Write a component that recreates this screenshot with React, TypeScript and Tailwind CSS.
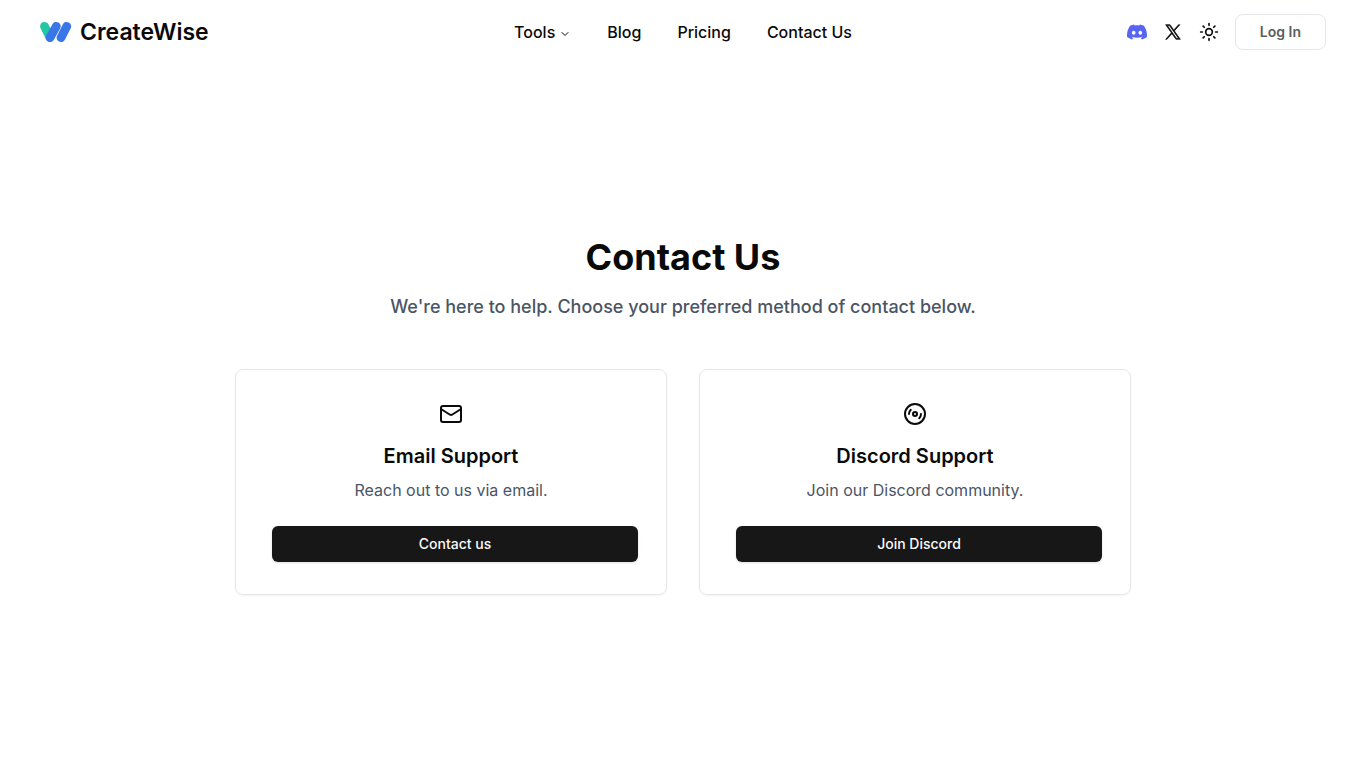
import React, { ReactNode } from 'react';
import { ChevronDown, Disc3, Mail, Sun } from 'lucide-react';
import { SiDiscord } from 'react-icons/si';

interface SupportCardProps {
    icon: ReactNode;
    title: string;
    description: string;
    action: string;
}

const links = ['Blog', 'Pricing', 'Contact Us'];

function Logo() {
    return (
        <a href="#" className="flex items-center gap-2">
            <svg viewBox="0 0 32 22" className="h-[22px] w-8" fill="none" strokeWidth="8.8" strokeLinecap="round" aria-hidden="true">
                <path d="M4.5 5.3L10 16.4" stroke="#22c7a5" />
                <path d="M16.3 5.3L10 16.7" stroke="#3b76e8" />
                <path d="M26.8 5.3L21 16.7" stroke="#3b76e8" />
            </svg>
            <span className="text-[23px] leading-8 font-semibold">CreateWise</span>
        </a>
    );
}

function XIcon() {
    return (
        <svg viewBox="0 0 24 24" className="h-4 w-4" fill="currentColor" stroke="currentColor" strokeWidth="1" aria-hidden="true">
            <path d="M14.095 10.316L22.286 1h-1.94l-7.116 8.088L7.551 1H1l8.589 12.231L1 23h1.94l7.51-8.543L16.449 23H23zM11.437 13.338l-.872-1.218-6.924-9.689h2.981l5.59 7.822.868 1.219 7.265 10.166h-2.981z" />
        </svg>
    );
}

function Header() {
    return (
        <header className="grid h-16 grid-cols-[1fr_auto_1fr] items-center px-10">
            <Logo />

            <nav className="flex items-center gap-9 font-medium">
                <button type="button" className="flex items-center gap-1">
                    Tools
                    <ChevronDown className="mt-1 h-3 w-3" />
                </button>
                {links.map((link) => (
                    <a key={link} href="#">{link}</a>
                ))}
            </nav>

            <div className="flex items-center justify-end gap-4">
                <a href="#" aria-label="Discord">
                    <SiDiscord className="h-5 w-5 text-[#5865f2]" />
                </a>
                <a href="#" aria-label="X" className="flex w-5 justify-center">
                    <XIcon />
                </a>
                <button type="button" aria-label="Toggle theme">
                    <Sun className="h-5 w-5" />
                </button>
                <button
                    type="button"
                    className="h-9 rounded-lg border border-gray-200 px-6 text-sm font-semibold text-[#5c5c5c]"
                >
                    Log In
                </button>
            </div>
        </header>
    );
}

function SupportCard({ icon, title, description, action }: SupportCardProps) {
    return (
        <section className="rounded-lg border border-gray-200 p-8 text-center shadow-xs">
            <div className="mb-4 flex justify-center">{icon}</div>
            <h2 className="mb-2 text-xl font-semibold">{title}</h2>
            <p className="mb-6 text-gray-600">{description}</p>
            <button
                type="button"
                className="ml-1 h-9 w-full rounded-md bg-[#171717] text-sm font-medium text-neutral-50 shadow-sm"
            >
                {action}
            </button>
        </section>
    );
}

export default function App() {
    return (
        <div className="flex min-h-screen flex-col bg-white font-['Inter',sans-serif] text-neutral-950">
            <Header />

            <main className="flex flex-1 flex-col items-center justify-center px-4">
                <h1 className="mb-4 text-4xl font-bold">Contact Us</h1>
                <p className="mb-12 text-center text-lg font-medium text-gray-600">
                    We're here to help. Choose your preferred method of contact below.
                </p>

                <div className="grid w-full max-w-4xl gap-8 md:grid-cols-2">
                    <SupportCard
                        icon={<Mail className="h-6 w-6" />}
                        title="Email Support"
                        description="Reach out to us via email."
                        action="Contact us"
                    />
                    <SupportCard
                        icon={<Disc3 className="h-6 w-6" />}
                        title="Discord Support"
                        description="Join our Discord community."
                        action="Join Discord"
                    />
                </div>
            </main>
        </div>
    );
}
